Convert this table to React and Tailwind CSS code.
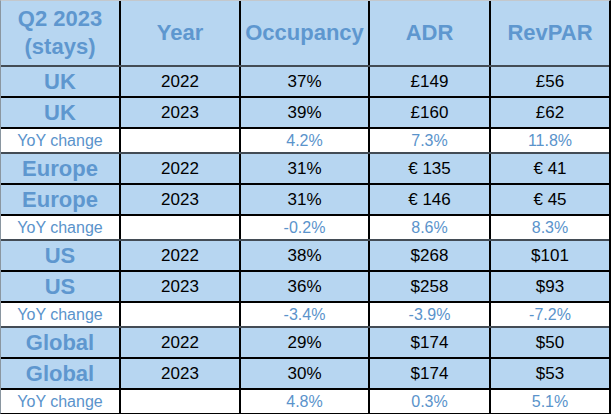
import React from "react";

const groups = [
  { label: "UK", rows: [["2022", "37%", "£149", "£56"], ["2023", "39%", "£160", "£62"]], yoy: ["4.2%", "7.3%", "11.8%"] },
  { label: "Europe", rows: [["2022", "31%", "€ 135", "€ 41"], ["2023", "31%", "€ 146", "€ 45"]], yoy: ["-0.2%", "8.6%", "8.3%"] },
  { label: "US", rows: [["2022", "38%", "$268", "$101"], ["2023", "36%", "$258", "$93"]], yoy: ["-3.4%", "-3.9%", "-7.2%"] },
  { label: "Global", rows: [["2022", "29%", "$174", "$50"], ["2023", "30%", "$174", "$53"]], yoy: ["4.8%", "0.3%", "5.1%"] },
];

const rowGrid = "grid grid-cols-[118px_118px_127px_119px_118px] gap-x-[2px] bg-black";
const blueCell = "bg-[#b7d6f1] flex items-center justify-center";
const whiteCell = "bg-white flex items-center justify-center";

function DataRow({ label, values }) {
  return (
    <div className={`${rowGrid} h-[29px]`}>
      <div className={`${blueCell} text-[22px] font-bold text-[#5e97cf] leading-none`}>{label}</div>
      {values.map((v, i) => (
        <div key={i} className={`${blueCell} text-[17px] text-black leading-none`}>{v}</div>
      ))}
    </div>
  );
}

function YoyRow({ values }) {
  return (
    <div className={`${rowGrid} h-[23px]`}>
      <div className={`${whiteCell} text-[16px] text-[#5a93cb] leading-none`}>YoY change</div>
      <div className={whiteCell}></div>
      {values.map((v, i) => (
        <div key={i} className={`${whiteCell} text-[16px] text-[#5a93cb] leading-none`}>{v}</div>
      ))}
    </div>
  );
}

export default function App() {
  return (
    <div className="w-[611px] h-[414px] bg-white font-['Liberation_Sans',Arial,sans-serif]">
      <div className="flex flex-col border-l border-t border-l-[#8a96a0] border-t-[#c4c8cc] border-r-2 border-r-black border-b border-b-black">
        <div className={`${rowGrid} h-[64px]`}>
          <div className={`${blueCell} flex-col text-[22px] font-bold text-[#5e97cf] leading-[28px] text-center`}>
            <span>Q2 2023</span>
            <span>(stays)</span>
          </div>
          {["Year", "Occupancy", "ADR", "RevPAR"].map((h) => (
            <div key={h} className={`${blueCell} text-[22px] font-bold text-[#5e97cf] leading-none`}>{h}</div>
          ))}
        </div>
        {groups.map((g, gi) => (
          <React.Fragment key={g.label}>
            <div className="h-[2px] bg-[#434c55]"></div>
            <DataRow label={g.label} values={g.rows[0]} />
            <div className="h-[2px] bg-black"></div>
            <DataRow label={g.label} values={g.rows[1]} />
            <div className="h-[2px] bg-black"></div>
            <YoyRow values={g.yoy} />
          </React.Fragment>
        ))}
      </div>
    </div>
  );
}
